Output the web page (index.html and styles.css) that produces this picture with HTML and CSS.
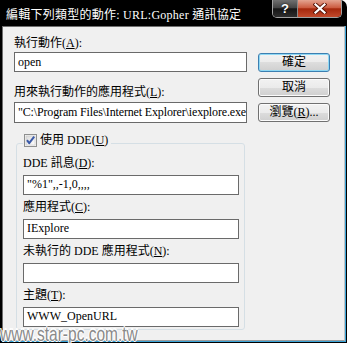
FILE: index.html
```html
<!DOCTYPE html>
<html>
<head>
<meta charset="utf-8">
<link rel="stylesheet" href="styles.css">
</head>
<body>
<div class="window">
  <div class="titlebar">
    <span class="title">編輯下列類型的動作: URL:Gopher 通訊協定</span>
    <div class="caption">
      <span class="cap-btn help">?</span>
      <span class="cap-btn close">
        <svg width="14" height="11" viewBox="0 0 14 11">
          <path d="M2.5 1.5 L11.5 9.5 M11.5 1.5 L2.5 9.5" stroke="#5b1608" stroke-width="4" stroke-linecap="square" fill="none"/>
          <path d="M2.5 1.5 L11.5 9.5 M11.5 1.5 L2.5 9.5" stroke="#ffffff" stroke-width="2.2" stroke-linecap="square" fill="none"/>
        </svg>
      </span>
    </div>
  </div>
  <div class="frame">
    <div class="client">
      <div class="main">
        <div class="left">
          <div class="lbl">執行動作(<u>A</u>):</div>
          <div class="field f1">open</div>
          <div class="lbl l2">用來執行動作的應用程式(<u>L</u>):</div>
          <div class="field f2">"C:\Program Files\Internet Explorer\iexplore.exe</div>
          <fieldset class="dde">
            <legend>
              <span class="check">
                <svg width="13" height="13" viewBox="0 0 13 13">
                  <defs>
                    <linearGradient id="cb" x1="0" y1="0" x2="1" y2="1">
                      <stop offset="0" stop-color="#d9d9d9"/>
                      <stop offset="1" stop-color="#ffffff"/>
                    </linearGradient>
                  </defs>
                  <rect x="0.5" y="0.5" width="12" height="12" fill="#f4f4f4" stroke="#8e8f8f"/>
                  <rect x="2" y="2" width="9" height="9" fill="url(#cb)" stroke="#c6c6c6" stroke-width="0.6"/>
                  <path d="M3 6.2 L5.2 9.2 L10.2 2.6" stroke="#3b5aa8" stroke-width="2" fill="none" stroke-linejoin="round"/>
                </svg>
              </span>使用 DDE(<u>U</u>)
            </legend>
            <div class="lbl">DDE 訊息(<u>D</u>):</div>
            <div class="field g">"%1",,-1,0,,,,</div>
            <div class="lbl gl">應用程式(<u>C</u>):</div>
            <div class="field g">IExplore</div>
            <div class="lbl gl">未執行的 DDE 應用程式(<u>N</u>):</div>
            <div class="field g"></div>
            <div class="lbl gl">主題(<u>T</u>):</div>
            <div class="field g">WWW_OpenURL</div>
          </fieldset>
        </div>
        <div class="buttons">
          <div class="btn default">確定</div>
          <div class="btn">取消</div>
          <div class="btn">瀏覽(<u>R</u>)...</div>
        </div>
      </div>
    </div>
  </div>
  <div class="watermark">www.star-pc.com.tw</div>
</div>
</body>
</html>
```
FILE: styles.css
```css
html, body {
  margin: 0;
  padding: 0;
  background: #ffffff;
}

.window {
  position: relative;
  width: 347px;
  height: 343px;
  background: #000000;
  border-top-right-radius: 7px;
  display: flex;
  flex-direction: column;
  overflow: hidden;
  font-family: "Liberation Serif", "Noto Sans CJK TC", serif;
  font-size: 12px;
  color: #000000;
}

.titlebar {
  height: 26px;
  flex-shrink: 0;
  display: flex;
}

.title {
  color: #ffffff;
  line-height: 16px;
  margin: 7px 0 0 6px;
  letter-spacing: 0.25px;
  white-space: nowrap;
}

.caption {
  margin-left: auto;
  margin-right: 5px;
  height: 18px;
  box-sizing: border-box;
  display: flex;
  border: 1px solid #a3a3a3;
  border-top: 0;
  border-radius: 0 0 5px 5px;
  overflow: hidden;
}

.cap-btn {
  height: 17px;
  display: flex;
  align-items: center;
  justify-content: center;
}

.help {
  width: 24px;
  background: linear-gradient(#707070, #454545 45%, #151515 52%, #2e2e2e);
  border-right: 1px solid #8a8a8a;
  color: #ffffff;
  font-family: "Liberation Sans", sans-serif;
  font-weight: bold;
  font-size: 13px;
  text-shadow: 0 0 2px #000;
}

.close {
  width: 43px;
  background: linear-gradient(#e4a491, #cc5c41 45%, #a5270c 52%, #c24a2c);
}

.frame {
  flex: 1;
  margin: 0 1px 1px 2px;
  border-right: 1px solid #39a3d7;
  border-bottom: 1px solid #39a3d7;
  display: flex;
}

.client {
  flex: 1;
  background: #f0f0f0;
  border: 1px solid #6e6e6e;
  border-right-color: #c4c4c4;
  border-bottom-color: #9c9c9c;
  padding: 8px 0 0 11px;
}

.main {
  display: flex;
}

.left {
  width: 233px;
}

.lbl {
  height: 16px;
  line-height: 16px;
  white-space: nowrap;
}

.l2 {
  margin-top: 12px;
}

.field {
  box-sizing: border-box;
  height: 20px;
  border: 1px solid #6a6a6a;
  background: #ffffff;
  line-height: 18px;
  padding-left: 3px;
  white-space: nowrap;
  overflow: hidden;
  font-family: "Liberation Serif", serif;
}

.f1 {
  margin-top: 1px;
}

.f2 {
  margin-top: 2px;
  height: 21px;
  line-height: 19px;
  letter-spacing: -0.15px;
}

.dde {
  box-sizing: border-box;
  width: 229px;
  margin: 9px 0 0 2px;
  padding: 1px 5px 2px 6px;
  border: 1px solid #d5dfe5;
  border-radius: 3px;
  min-width: 0;
}

.dde legend {
  padding: 0 3px 6px 1px;
  line-height: 16px;
  display: flex;
  align-items: center;
}

.check {
  width: 13px;
  height: 13px;
  margin-right: 3px;
  display: flex;
}

.field.g {
  margin-top: 4px;
  line-height: 16px;
}

.gl {
  margin-top: 4px;
}

.buttons {
  width: 72px;
  margin-left: 11px;
  padding-top: 18px;
  display: flex;
  flex-direction: column;
  gap: 6px;
}

.btn {
  box-sizing: border-box;
  height: 19px;
  border: 1px solid #707070;
  border-radius: 3px;
  background: linear-gradient(#f2f2f2, #ebebeb 50%, #dddddd 50%, #cfcfcf);
  box-shadow: inset 0 0 0 1px #fbfbfb;
  text-align: center;
  line-height: 17px;
  white-space: nowrap;
}

.btn.default {
  border-color: #3c7fb1;
  box-shadow: inset 0 0 0 1px #8fd8f4;
}

.watermark {
  position: absolute;
  left: 0;
  top: 328px;
  font-family: "Liberation Sans", sans-serif;
  font-size: 15.5px;
  line-height: 0.6;
  color: #8a8a8a;
  transform: scaleY(1.25);
  transform-origin: 0 0;
  text-shadow: 1px 0 0 #fff, -1px 0 0 #fff, 0 1px 0 #fff, 0 -1px 0 #fff;
  white-space: nowrap;
}
```
